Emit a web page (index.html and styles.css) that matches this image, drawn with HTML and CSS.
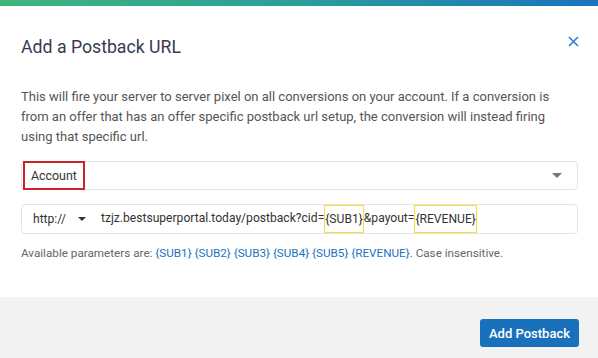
FILE: index.html
```html
<!DOCTYPE html>
<html>
<head>
<meta charset="utf-8">
<link rel="stylesheet" href="styles.css">
</head>
<body>
<div class="modal">
  <div class="topbar"></div>
  <div class="header">
    <h1 class="title">Add a Postback URL</h1>
    <button class="close" aria-label="Close">
      <svg width="11" height="11" viewBox="0 0 11 11"><path d="M1 1L10 10M10 1L1 10" stroke="#2f7fd6" stroke-width="1.6" fill="none"/></svg>
    </button>
  </div>
  <div class="body">
    <p class="desc">This will fire your server to server pixel on all conversions on your account. If a conversion is from an offer that has an offer specific postback url setup, the conversion will instead firing using that specific url.</p>
    <div class="select">
      <span class="select-value">Account</span>
      <span class="caret caret-select"></span>
    </div>
    <div class="url-input">
      <span class="proto">http://</span>
      <span class="caret caret-proto"></span>
      <span class="url-text">tzjz.bestsuperportal.today/postback?cid=<span class="hl">{SUB1}</span>&amp;payout=<span class="hl">{REVENUE}</span></span>
    </div>
    <p class="help">Available parameters are: <a class="param">{SUB1}</a> <a class="param">{SUB2}</a> <a class="param">{SUB3}</a> <a class="param">{SUB4}</a> <a class="param">{SUB5}</a> <a class="param">{REVENUE}</a>. Case insensitive.</p>
  </div>
  <div class="footer">
    <button class="btn-primary">Add Postback</button>
  </div>
</div>
</body>
</html>
```
FILE: styles.css
```css
* { box-sizing: border-box; }
html, body { margin: 0; padding: 0; background: #fff; }
body { font-family: Roboto, "Liberation Sans", Arial, sans-serif; width: 598px; height: 358px; overflow: hidden; }
.modal { display: flex; flex-direction: column; height: 358px; }
.topbar { height: 6px; background: linear-gradient(90deg, #3fb57c 0%, #2a9e9a 50%, #1b72bf 100%); }
.header { display: flex; justify-content: space-between; align-items: flex-start; padding: 30px 19px 0 21px; }
.title { margin: 0; font-size: 17.7px; font-weight: 400; color: #363a52; line-height: 22px; }
.close { border: 0; background: none; padding: 0; margin-top: 0; width: 11px; height: 11px; display: block; cursor: pointer; }
.close svg { display: block; }
.body { padding: 0 20px 0 21px; flex: 1; }
.desc { margin: 29px 0 0; font-size: 13px; line-height: 20px; color: #555; }
.select { margin-top: 14px; height: 29px; border: 1px solid #e3e3e3; border-radius: 4px; display: flex; align-items: center; position: relative; }
.select-value { font-size: 12.4px; color: #333; border: 2px solid #d0202a; height: 29px; margin: -1px 0 0 1px; padding: 0 6px 0 6px; display: flex; align-items: center; align-self: flex-start; }
.caret { width: 0; height: 0; border-left: 5px solid transparent; border-right: 5px solid transparent; border-top: 5px solid #666; }
.caret-select { margin-left: auto; margin-right: 15px; border-top-color: #777; }
.url-input { margin-top: 14px; height: 30px; border: 1px solid #e3e3e3; border-radius: 4px; display: flex; align-items: center; padding-left: 11px; font-size: 12.1px; color: #333; }
.proto { color: #333; }
.caret-proto { margin-left: 12px; margin-right: 15px; border-top-color: #333; border-left-width: 4px; border-right-width: 4px; border-top-width: 4px; }
.url-text { color: #333; white-space: nowrap; }
.hl { border: 1px solid #f0e23a; display: inline-block; height: 28px; line-height: 26px; vertical-align: middle; }
.help { margin: 11px 0 0; font-size: 11.7px; color: #666; line-height: 16px; }
.param { color: #1a73c0; text-decoration: none; }
.footer { background: #f2f2f2; height: 61px; display: flex; justify-content: flex-end; align-items: flex-start; padding: 22px 19px 0 0; }
.btn-primary { background: #1a71bb; color: #fff; border: 0; border-radius: 3px; font-family: Roboto, "Liberation Sans", Arial, sans-serif; font-size: 13px; font-weight: 500; height: 28px; width: 99px; padding: 0; }
```
